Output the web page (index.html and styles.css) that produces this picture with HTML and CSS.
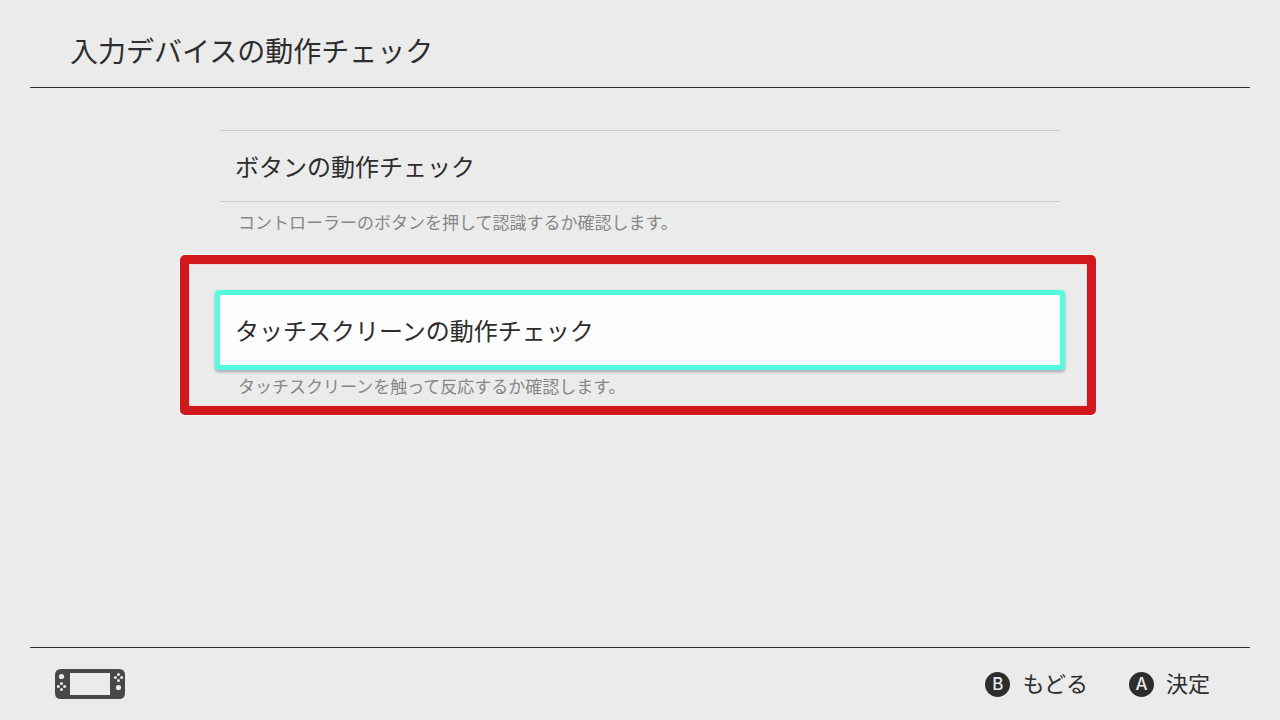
FILE: index.html
```html
<!DOCTYPE html>
<html lang="ja">
<head>
<meta charset="utf-8">
<meta name="viewport" content="width=device-width, initial-scale=1">
<title>入力デバイスの動作チェック</title>
<link rel="stylesheet" href="styles.css">
</head>
<body>
<div class="screen">
  <header class="header">
    <h1 class="title">入力デバイスの動作チェック</h1>
  </header>
  <main class="menu">
    <section class="entry">
      <button class="item" type="button" aria-describedby="d1">ボタンの動作チェック</button>
      <p class="note" id="d1">コントローラーのボタンを押して認識するか確認します。</p>
    </section>
    <section class="entry">
      <button class="item item-selected" type="button" aria-describedby="d2">タッチスクリーンの動作チェック</button>
      <p class="note" id="d2">タッチスクリーンを触って反応するか確認します。</p>
      <div class="marker" aria-hidden="true"></div>
    </section>
  </main>
  <footer class="footer">
    <svg class="console" viewBox="0 0 70 30" aria-hidden="true">
      <path fill="#484848" fill-rule="evenodd" d="M6 0H64Q70 0 70 6V24Q70 30 64 30H6Q0 30 0 24V6Q0 0 6 0ZM15 4V26H55V4Z"/>
      <g fill="#ebebeb">
        <circle cx="6.5" cy="7.5" r="2.6"/>
        <circle cx="6.5" cy="14.4" r="1.5"/><circle cx="6.5" cy="20.6" r="1.5"/>
        <circle cx="3.4" cy="17.5" r="1.5"/><circle cx="9.6" cy="17.5" r="1.5"/>
        <circle cx="63.5" cy="5.4" r="1.5"/><circle cx="63.5" cy="11.6" r="1.5"/>
        <circle cx="60.4" cy="8.5" r="1.5"/><circle cx="66.6" cy="8.5" r="1.5"/>
        <circle cx="63.5" cy="18.5" r="2.6"/>
      </g>
    </svg>
    <div class="hints">
      <button class="hint" type="button"><span class="key">B</span><span class="label">もどる</span></button>
      <button class="hint" type="button"><span class="key">A</span><span class="label">決定</span></button>
    </div>
  </footer>
</div>
</body>
</html>
```
FILE: styles.css
```css
* { box-sizing: border-box; }
body {
  margin: 0;
  background: #ebebeb;
  color: #2d2d2d;
  font-family: "Noto Sans CJK JP", sans-serif;
}
button {
  font: inherit;
  color: inherit;
  background: none;
  border: 0;
  border-radius: 0;
  cursor: pointer;
}
.screen {
  min-height: 100vh;
  padding: 0 30px;
  display: flex;
  flex-direction: column;
}
.header {
  padding: 30px 40px 17px;
  border-bottom: 1px solid #2d2d2d;
}
.title {
  margin: 0;
  font-size: 28px;
  line-height: 40px;
  font-weight: 400;
}
.menu {
  flex: 1;
  width: 100%;
  max-width: 840px;
  margin: 0 auto;
  padding: 42px 0;
  display: flex;
  flex-direction: column;
  gap: 59px;
}
.entry {
  position: relative;
  display: flow-root;
}
.item {
  display: block;
  width: 100%;
  height: 72px;
  padding: 0 15px;
  border-top: 1px solid #cccccc;
  border-bottom: 1px solid #cccccc;
  text-align: left;
  font-size: 24px;
  line-height: 36px;
}
.item-selected {
  width: calc(100% + 10px);
  height: 80px;
  margin: -4px -5px;
  background: #fdfdfd;
  border: 5px solid #53fcdc;
  border-radius: 4px;
  box-shadow: 0 2px 3px rgba(60, 70, 90, 0.4);
}
.note {
  margin: 0;
  padding: 7px 18px 0;
  font-size: 17px;
  line-height: 26px;
  color: #868686;
}
.marker {
  position: absolute;
  top: -39px;
  right: -36px;
  bottom: -16px;
  left: -40px;
  border: 9px solid #d0181d;
  border-radius: 5px;
  box-shadow: 0 0 1px 1px #f8f8f8, inset 0 0 1px 1px #f4d4d4;
  pointer-events: none;
}
.footer {
  height: 73px;
  padding: 0 40px 0 25px;
  border-top: 1px solid #2d2d2d;
  display: flex;
  align-items: center;
  justify-content: space-between;
}
.console { width: 70px; height: 30px; }
.hints { display: flex; gap: 41px; }
.hint {
  display: flex;
  align-items: center;
  gap: 12px;
  padding: 0;
  font-size: 22px;
  line-height: 32px;
}
.label { padding-bottom: 4px; }
.key {
  width: 25px;
  height: 25px;
  border-radius: 50%;
  background: #2d2d2d;
  color: #ebebeb;
  font-family: Inter, sans-serif;
  font-size: 17px;
  font-weight: 500;
  line-height: 25px;
  text-align: center;
}
```
